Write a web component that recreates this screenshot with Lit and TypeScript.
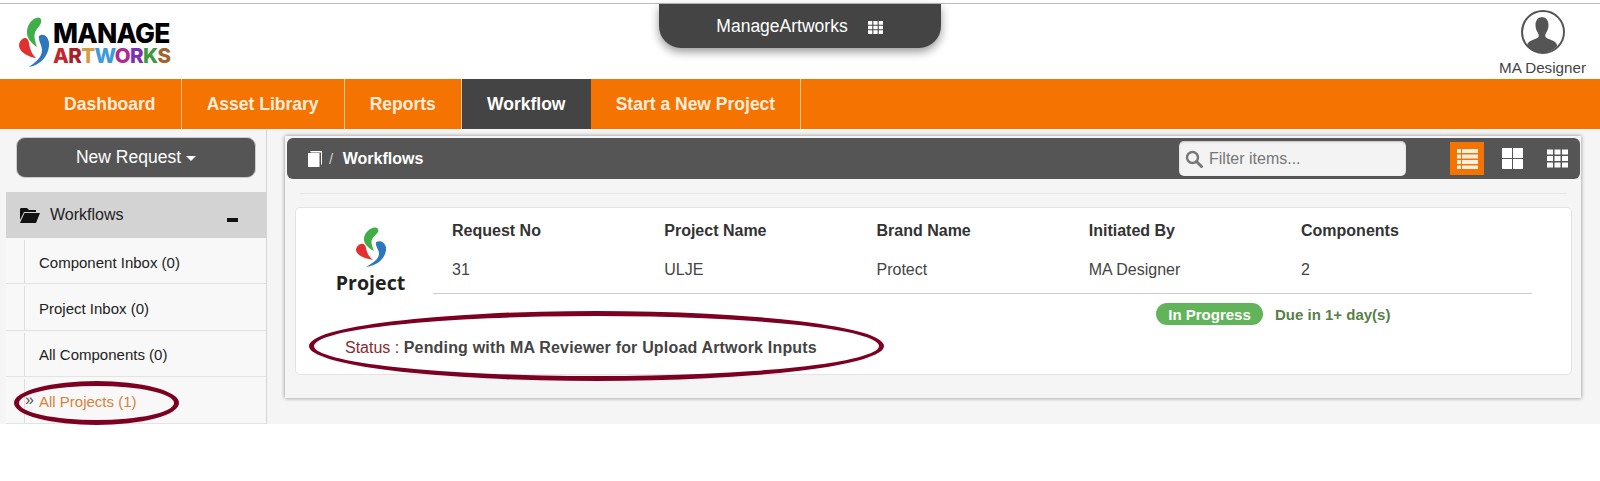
import { LitElement, html, css, svg } from "lit";
import { customElement } from "lit/decorators.js";

const swirl = svg`
  <path fill="#3fae49" d="M19 .5C23.500 .5 23 6 20 9.500C17 13 15 16 15.500 20C16 24 17 27 18 30C12 26 7.500 21 8 14C8.500 7 14 1 19 .5Z"/>
  <path fill="#2f77bc" d="M20 19C25 15 31 21 30 29C29 39 22 48 10 50C17 45 23 40 23 33C23 28 19 24 20 19Z"/>
  <path fill="#e0312f" d="M6 21C10 21 10 27 11 31C12 35 14 38 17 41C10 40 1 36 0 29C0 25 3 21 6 21Z"/>`;

const grid3 = svg`<path fill="currentColor" d="M0 0h6v5H0zM7.5 0h6v5h-6zM15 0h6v5h-6zM0 6.5h6v5H0zM7.5 6.5h6v5h-6zM15 6.5h6v5h-6zM0 13h6v5H0zM7.5 13h6v5h-6zM15 13h6v5h-6z"/>`;

@customElement("app-root")
export class AppRoot extends LitElement {
  static styles = css`
    :host { display: block; position: relative; height: 481px; overflow: hidden; background: #fff;
      font-family: "Liberation Sans", Arial, sans-serif; color: #333; font-size: 14px; }
    .rule { height: 1px; margin-top: 3px; background: #bbb; }
    .header { height: 75px; display: grid; grid-template-columns: 1fr 282px 1fr; }
    .logo { display: flex; align-items: flex-start; padding: 13px 0 0 19px; gap: 4px; }
    .logo svg { width: 30px; height: 50px; margin-top: 0; }
    .wordmark { display: flex; flex-direction: column; font-family: Inter, sans-serif; font-weight: 800; padding-top: 3px; }
    .wm1 { font-size: 26.5px; line-height: 27px; color: #000; letter-spacing: -.7px; }
    .wm2 { font-size: 20.5px; line-height: 19px; letter-spacing: -.6px; margin-top: -1px; }
    .pill { height: 44px; background: #444; border-radius: 0 0 22px 22px; box-shadow: 0 4px 10px rgba(0,0,0,.4);
      display: flex; align-items: flex-start; justify-content: center; gap: 20px; color: #fff; font-size: 17.5px; padding: 13px 1px 0 0; box-sizing: border-box; line-height: 18px; }
    .pill svg { width: 15px; height: 15px; margin-top: 3px; }
    .user { display: flex; flex-direction: column; align-items: flex-end; padding: 6px 14px 0 0; }
    .user svg { width: 44px; height: 44px; margin-right: 21px; display: block; }
    .user span { font-size: 15.2px; line-height: 17px; margin-top: 5px; color: #444; }
    nav { height: 50px; background: #f57300; display: flex; padding-left: 39px; }
    nav a { display: flex; align-items: center; padding: 0 25.1px; border-right: 1px solid #f8c48c; color: #ffeedd; font-weight: bold; font-size: 17.5px; }
    nav a.active { background: #444; color: #fff; border-right: none; }
    .body { height: 295px; background: #f5f5f5; display: flex; }
    .side { width: 267px; box-sizing: border-box; height: 100%; border-right: 1px solid #d5d5d5; padding-left: 6px; flex: none; display: flex; flex-direction: column; }
    .newreq { height: 41px; margin: 8px 0 0 10px; width: 240px; box-sizing: border-box; border: 1px solid #ccc; border-radius: 9px; background: #555; color: #fff; font-size: 17.5px; display: flex; align-items: center; justify-content: center; gap: 5px; }
    .caret { border-top: 5px solid #fff; border-left: 5px solid transparent; border-right: 5px solid transparent; margin-top: 2px; }
    .wf { height: 46px; margin-top: 14px; background: #d3d3d3; display: flex; align-items: center; color: #222; font-size: 16px; padding: 0 28px 0 14px; }
    .wf svg { width: 20px; height: 16px; margin-right: 10px; }
    .wf b { margin-left: auto; width: 11px; height: 4px; background: #111; margin-top: 10px; }
    .item { height: 46.4px; box-sizing: border-box; border-bottom: 1px solid #e3e3e3; display: flex; align-items: center; background: #f8f8f8; position: relative; font-size: 15px; color: #222; padding-top: 3px; }
    .item i { position: absolute; left: 0; top: 2px; bottom: 0; width: 19px; box-sizing: border-box; border-right: 1px solid #ddd; }
    .item em { font-style: normal; margin-left: 33px; }
    .item.on { color: #d9803a; }
    .item .arrows { position: absolute; left: 19px; top: 13px; font-size: 16px; line-height: 20px; color: #555; }
    .main { flex: 1; padding: 7px 19px 0 18px; }
    .panel { height: 262px; box-sizing: border-box; width: 1296px; background: #f5f5f5; box-shadow: 0 0 4px rgba(0,0,0,.45); padding: 2px 1px 0 2px; }
    .bar { height: 41px; background: #555; border-radius: 6px; display: flex; align-items: center; color: #fff; padding-left: 20px; }
    .bar .book { width: 15px; height: 16px; }
    .sl { margin: 0 8px 0 7px; color: #ccc; font-size: 15px; }
    .bar strong { font-size: 16px; margin-left: 1.5px; }
    .search { margin-left: auto; width: 227px; height: 35px; box-sizing: border-box; background: #f3f3f3; border-radius: 5px; display: flex; align-items: center; padding-left: 6px; gap: 6px; color: #777; font-size: 16px; box-shadow: inset 0 1px 2px rgba(0,0,0,.2); }
    .search svg { width: 18px; height: 18px; }
    .views { display: flex; align-items: center; margin: 0 6px 0 44px; }
    .vbtn { width: 34px; height: 33px; display: flex; align-items: center; justify-content: center; color: #fff; margin-right: 11px; }
    .vbtn:last-child { margin-right: 0; }
    .vbtn.on { background: #f57300; color: #fdf0e0; }
    .vbtn svg { width: 21px; height: 21px; display: block; }
    hr { border: 0; border-top: 1px solid #e6e6e6; margin: 14px 13px 13px 13px; }
    .card { margin: 0 8px; height: 168px; box-sizing: border-box; background: #fff; border: 1px solid #e3e3e3; border-radius: 5px; display: flex; flex-direction: column; }
    .top { display: flex; }
    .mark { width: 137px; flex: none; display: flex; flex-direction: column; align-items: center; padding: 19px 0 0 12px; box-sizing: border-box; }
    .mark svg { width: 30px; height: 40px; }
    .mark span { font-family: "Open Sans", sans-serif; font-weight: bold; font-size: 19.6px; line-height: 28px; color: #222; margin-top: 2px; }
    .cols { margin-right: 39px; flex: 1; height: 86px; border-bottom: 1px solid #ccc; display: grid; grid-template-columns: repeat(5, 212.25px); padding: 14px 0 0 19px; box-sizing: border-box; }
    .cols b { font-size: 16px; line-height: 18px; color: #333; display: block; }
    .cols span { display: block; font-size: 16px; line-height: 18px; margin-top: 21px; color: #444; }
    .state { display: flex; align-items: center; gap: 12px; padding: 6px 0 0 860px; }
    .badge { width: 107px; height: 22px; border-radius: 11px; background: #62b45a; color: #fff; font-weight: bold; font-size: 15px; display: flex; align-items: center; justify-content: center; }
    .due { color: #578047; font-weight: bold; font-size: 15px; }
    .status { padding: 13px 0 0 49px; font-size: 16px; line-height: 20px; color: #8a2a2f; }
    .status b { color: #444; letter-spacing: .18px; }
    .ring { position: absolute; border: 5px solid #7d0022; border-radius: 50%; box-sizing: border-box; pointer-events: none; }
    .ring.a { left: 309px; top: 311px; width: 575px; height: 70px; }
    .ring.b { left: 14px; top: 381px; width: 165px; height: 44px; }
  `;

  render() {
    const items = ["Component Inbox (0)", "Project Inbox (0)", "All Components (0)"];
    const colors: [string, string][] = [["A", "#c4262e"], ["R", "#a81e2b"], ["T", "#d79a3e"], ["W", "#3c9bd8"], ["O", "#b0298f"], ["R", "#7b30b6"], ["K", "#3d993c"], ["S", "#a0642e"]];
    return html`
      <div class="rule"></div>
      <header class="header">
        <div class="logo">
          <svg viewBox="0 0 30 50">${swirl}</svg>
          <div class="wordmark">
            <span class="wm1">MANAGE</span>
            <span class="wm2">${colors.map(([c, col]) => html`<span style="color:${col}">${c}</span>`)}</span>
          </div>
        </div>
        <div class="pill">ManageArtworks <svg viewBox="0 0 21 18">${grid3}</svg></div>
        <div class="user">
          <svg viewBox="0 0 44 44">
            <circle cx="22" cy="22" r="21" fill="#fff" stroke="#555" stroke-width="2"/>
            <path fill="#555" d="M22 7c-5 0-7.500 3.500-7.500 8 0 3 1 6 2.500 8 .8 1.200.8 2.500.5 4-1 1.500-7 3-9.500 5-1.200 1-2 2.500-2.300 4A21 21 0 0 0 22 42.700 21 21 0 0 0 36.300 36c-.3-1.500-1.100-3-2.300-4-2.500-2-8.500-3.500-9.500-5-.3-1.500-.3-2.800.5-4 1.500-2 2.500-5 2.500-8 0-4.500-2.500-8-7.500-8z"/>
          </svg>
          <span>MA Designer</span>
        </div>
      </header>
      <nav>
        <a>Dashboard</a><a>Asset Library</a><a>Reports</a><a class="active">Workflow</a><a>Start a New Project</a>
      </nav>
      <div class="body">
        <aside class="side">
          <div class="newreq">New Request <span class="caret"></span></div>
          <div class="wf">
            <svg viewBox="0 0 20 16"><path fill="#111" d="M1 1h6l2 2h7v2H4L0 13V2zM4.500 6H20l-4 10H0z"/></svg>
            Workflows<b></b>
          </div>
          ${items.map((t) => html`<div class="item"><i></i><em>${t}</em></div>`)}
          <div class="item on"><i></i><span class="arrows">»</span><em>All Projects (1)</em></div>
        </aside>
        <main class="main">
          <section class="panel">
            <div class="bar">
              <svg class="book" viewBox="0 0 15 16"><path fill="#fff" d="M3 0h12v13l-1 1V1.500H4zM1 2h11.500v14H1z"/></svg>
              <span class="sl">/</span>
              <strong>Workflows</strong>
              <div class="search">
                <svg viewBox="0 0 18 18"><circle cx="7.500" cy="7.500" r="5.500" fill="none" stroke="#777" stroke-width="2.400"/><path d="M11.500 11.500 L16.500 16.500" stroke="#777" stroke-width="3" stroke-linecap="round"/></svg>
                Filter items...
              </div>
              <div class="views">
                <div class="vbtn on"><svg viewBox="0 0 21 21"><path fill="currentColor" d="M0 1h4v4H0zM5 1h16v4H5zM0 6.500h4v4H0zM5 6.500h16v4H5zM0 12h4v4H0zM5 12h16v4H5zM0 17.500h4v3.500H0zM5 17.500h16v3.500H5z"/></svg></div>
                <div class="vbtn"><svg viewBox="0 0 21 21"><path fill="currentColor" d="M0 0h10v10H0zM11 0h10v10H11zM0 11h10v10H0zM11 11h10v10H11z"/></svg></div>
                <div class="vbtn"><svg viewBox="0 0 21 18">${grid3}</svg></div>
              </div>
            </div>
            <hr />
            <article class="card">
              <div class="top">
                <div class="mark">
                  <svg viewBox="0 0 30 50" preserveAspectRatio="none">${swirl}</svg>
                  <span>Project</span>
                </div>
                <div class="cols">
                  <div><b>Request No</b><span>31</span></div>
                  <div><b>Project Name</b><span>ULJE</span></div>
                  <div><b>Brand Name</b><span>Protect</span></div>
                  <div><b>Initiated By</b><span>MA Designer</span></div>
                  <div><b>Components</b><span>2</span></div>
                </div>
              </div>
              <div class="state"><span class="badge">In Progress</span><span class="due">Due in 1+ day(s)</span></div>
              <div class="status">Status : <b>Pending with MA Reviewer for Upload Artwork Inputs</b></div>
            </article>
          </section>
        </main>
      </div>
      <div class="ring a"></div>
      <div class="ring b"></div>
    `;
  }
}
